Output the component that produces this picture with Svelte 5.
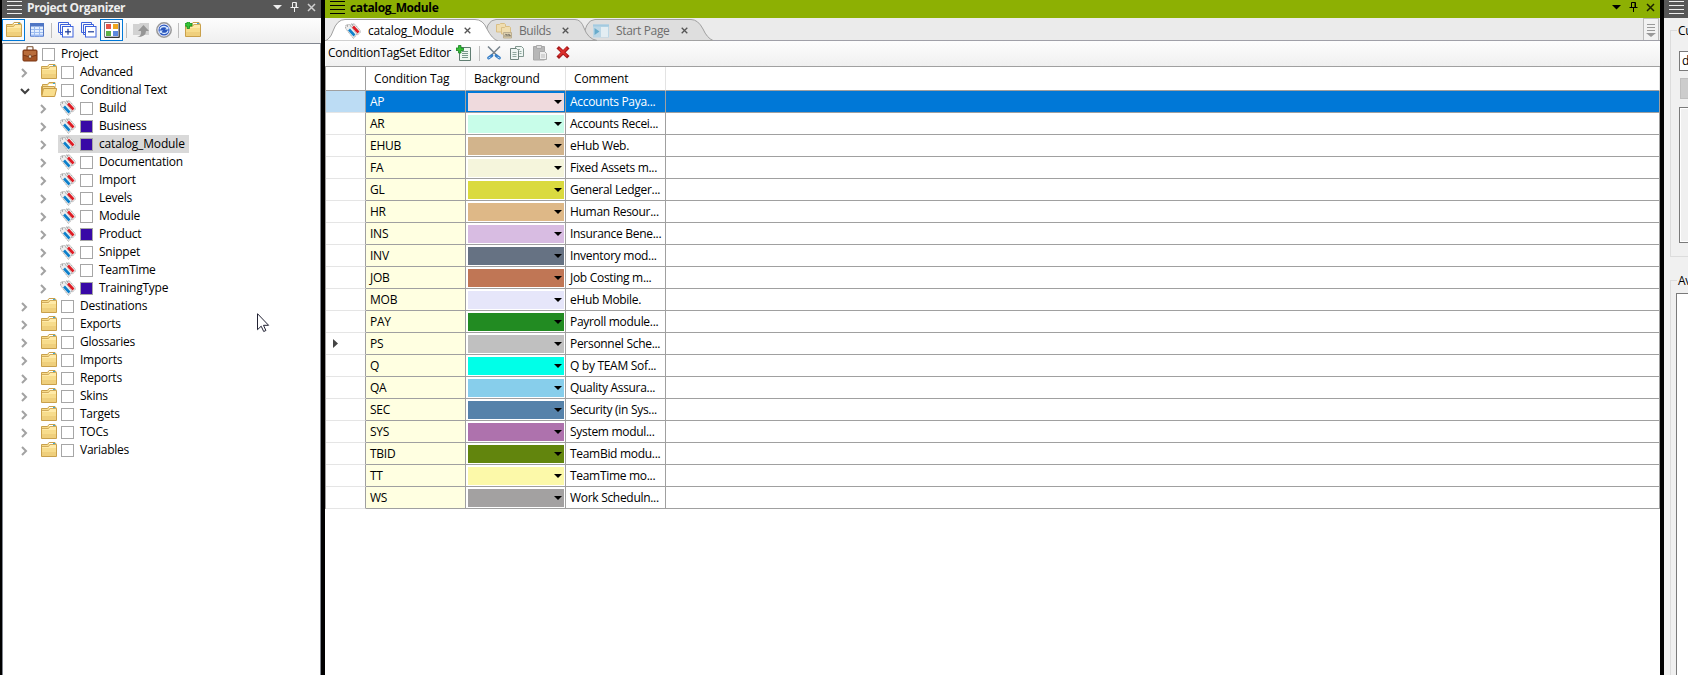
<script>
  const closed = ['Destinations', 'Exports', 'Glossaries', 'Imports', 'Reports', 'Skins', 'Targets', 'TOCs', 'Variables'];
  const tagSets = ['Build', 'Business', 'catalog_Module', 'Documentation', 'Import', 'Levels', 'Module', 'Product', 'Snippet', 'TeamTime', 'TrainingType'];
  const marked = ['Business', 'catalog_Module', 'Product', 'TrainingType'];
  const tree = [
    { label: 'Project', depth: 0, icon: 'case' },
    { label: 'Advanced', depth: 1, icon: 'folder' },
    { label: 'Conditional Text', depth: 1, icon: 'open' },
    ...tagSets.map((label) => ({ label, depth: 2, icon: 'tags', marked: marked.includes(label), selected: label === 'catalog_Module' })),
    ...closed.map((label) => ({ label, depth: 1, icon: 'folder' }))
  ];
  const rows = [
    ['AP', '#efdadd', 'Accounts Paya...'],
    ['AR', '#c8fde9', 'Accounts Recei...'],
    ['EHUB', '#d2b48c', 'eHub Web.'],
    ['FA', '#f5f5dc', 'Fixed Assets m...'],
    ['GL', '#dada3f', 'General Ledger...'],
    ['HR', '#deb887', 'Human Resour...'],
    ['INS', '#d8bce2', 'Insurance Bene...'],
    ['INV', '#667283', 'Inventory mod...'],
    ['JOB', '#c07655', 'Job Costing m...'],
    ['MOB', '#e6e6fa', 'eHub Mobile.'],
    ['PAY', '#228b22', 'Payroll module...'],
    ['PS', '#c0c0c0', 'Personnel Sche...'],
    ['Q', '#00ffe8', 'Q by TEAM Sof...'],
    ['QA', '#87ceeb', 'Quality Assura...'],
    ['SEC', '#5682aa', 'Security (in Sys...'],
    ['SYS', '#ae72ad', 'System modul...'],
    ['TBID', '#62850d', 'TeamBid modu...'],
    ['TT', '#fcf9a9', 'TeamTime mo...'],
    ['WS', '#a3a1a1', 'Work Scheduln...']
  ];
</script>

{#snippet icon(name)}
  <svg class="ic" width="16" height="16" viewBox="0 0 16 16">
    {#if name === 'folder' || name === 'add'}
      <path d="M.5 14.5v-12h6l1.5-2h6l1.5 2v12z" fill="#f7dc8c" stroke="#c9a04b" />
      <path d="M8 1.5h5.5" stroke="#fff" /><path d="M12 1.5h2" stroke="#3aa9d8" />
      <path d="M1 4.5h6.5l1.5-2h6V6H1z" fill="#ffeaa8" /><path d="M1 4.5h6.5l1.500-2h6" stroke="#d2ac5c" fill="none" />
      <path d="M1 10h14v4H1z" fill="#efcf7c" />
      {#if name === 'add'}<path d="M2 -1h2.500v2.500H7V4H4.500v2.500H2V4H-.5V1.500H2z" fill="#35c435" stroke="#168a22" stroke-width=".8" />{/if}
    {:else if name === 'open'}
      <path d="M1.500 13V2.500h5l1.500-2h6v12z" fill="#f5dc93" stroke="#c9a04b" />
      <path d="M8 2h6v3H3v-1h4z" fill="#fff" /><path d="M12 1.500h2" stroke="#3aa9d8" />
      <path d="M.5 13.500V4.500h13v2" fill="none" stroke="#c9a04b" />
      <path d="M2.500 6.500h13.200l-2 8H.7z" fill="#f9de8d" stroke="#c89b45" />
    {:else if name === 'case'}
      <path d="M5 5V2q0-1.500 1.500-1.500h3Q11 .5 11 2v3" fill="none" stroke="#97755c" stroke-width="1.500" />
      <rect x="1" y="4" width="14" height="11" rx="1" fill="#a45425" stroke="#7b3512" />
      <path d="M2 5h12v4l-6 2-6-2z" fill="#b96d3b" /><path d="M1 9l7 2 7-2" stroke="#7c3917" fill="none" />
      <rect x="6.500" y="9" width="3" height="3" rx="1" fill="#e8d2b8" stroke="#5c2a10" stroke-width=".6" />
    {:else if name === 'tags'}
      <path d="M5 3l1-2h3.500l6.500 7.500-3.500 3.500L5 5z" fill="#eee" stroke="#aaa" stroke-width="1" stroke-dasharray="1.500 .6" />
      <path d="M.500 5L1 2l3.500-.5 7.500 9.500-3.500 4.500L1 6z" fill="#eee" stroke="#aaa" stroke-width="1" stroke-dasharray="1.500 .6" />
      <path d="M8 3.500l5.500 6" stroke="#df1c24" stroke-width="2.600" /><path d="M4 6.500l5.500 6" stroke="#0d80cb" stroke-width="2.600" />
      <path d="M2 3h1M7 2h1" stroke="#777" />
    {:else if name === 'table'}
      <rect x="1.500" y="1.500" width="13" height="13" rx=".5" fill="#e3efff" stroke="#5578c4" /><path d="M1 1h14v3.500H1z" fill="#4f76c4" />
      <path d="M2 7.500h12M2 10.500h12M5.500 4.500v10M10.500 4.500v10" stroke="#9cbcf0" /><path d="M2 12.500h12v2H2z" fill="#9dbbf3" />
    {:else if name === 'expand' || name === 'collapse'}
      <path d="M4 10.500H.5v-10h10V3M6 12.500H2.500v-10h10V5" fill="none" stroke="#3c62dc" />
      <rect x="4.500" y="4.500" width="10.500" height="10.500" fill="#fff" stroke="#3c62dc" />
      <path d="M7 9.800h6" stroke="#173796" stroke-width="1.200" />{#if name === 'expand'}<path d="M10 6.800v6" stroke="#173796" stroke-width="1.200" />{/if}
    {:else if name === 'colors'}
      <rect x=".5" y=".5" width="14.500" height="14.500" fill="#fff" stroke="#778" /><path d="M15.300 1v14.500H1" stroke="#333" fill="none" />
      <path d="M2 2h5v5H2z" fill="#e65348" /><path d="M9 2h5v5H9z" fill="#f1a51c" /><path d="M2 9h5v5H2z" fill="#5fb24a" /><path d="M9 9h5v5H9z" fill="#5c88dd" />
    {:else if name === 'up'}
      <path d="M0 2h6l1-1h9v12H0z" fill="#d2d2d2" /><path d="M4 15q5-1 4-6H5l5.500-6L16 9h-3q0 6-9 6z" fill="#969696" />
    {:else if name === 'sync'}
      <circle cx="8" cy="8" r="7.200" fill="#eef" stroke="#999" stroke-width="1.500" /><circle cx="8" cy="8" r="5.500" fill="#2855bd" />
      <path d="M4 7.500q.5-3 4-3 2 0 3 1.500M12 8.500q-.5 3-4 3-2 0-3-1.500" stroke="#d8eaff" fill="none" stroke-width="1.300" /><path d="M12.500 4v3.500H9zM3.500 12V8.500H7z" fill="#d8eaff" />
    {:else if name === 'newdoc'}
      <path d="M3.500 2.500h11v13h-11z" fill="#f0f7f1" stroke="#607d72" /><path d="M6 6.500h6M6 8.500h6M6 10.500h6M6 12.500h6" stroke="#78978a" />
      <path d="M2.500 .5H5V3h2.500v2.500H5V8H2.500V5.500H0V3h2.500z" fill="#35bd35" stroke="#168022" stroke-width=".8" />
    {:else if name === 'cut'}
      <path d="M2 1.500l9 9M14 1.500l-9 9" stroke="#76828c" stroke-width="1.500" /><path d="M2.500 13l3.500-2.500M13.500 13L10 10.500" stroke="#357dc6" stroke-width="2.800" stroke-linecap="round" /><path d="M2.500 13l2-1M13.500 13l-2-1" stroke="#b5d8fa" />
    {:else if name === 'copy'}
      <path d="M6.500 1.500h6l2 2v8h-8z" fill="#eff6f3" stroke="#81978f" /><path d="M1.500 3.500h6l2 2v9h-8z" fill="#eff6f3" stroke="#70857e" />
      <path d="M3.500 7.500h4M3.500 9.500h4M3.500 11.500h4M8 4.500h3M10.500 6.500h2M10.500 8.500h2" stroke="#91a89f" />
    {:else if name === 'paste'}
      <path d="M1.500 1.500h11V15h-11z" fill="#b7b7b7" stroke="#a8a8a8" /><path d="M4.500 .5h5v3h-5z" fill="#ddd" stroke="#aaa" /><path d="M7.500 6.500h5l2 2v6h-7z" fill="#eee" stroke="#aaa" /><path d="M9 10h4M9 12h4" stroke="#bbb" />
    {:else if name === 'delete'}
      <path d="M4 3.500l8 7.500M12 3.500L4 11.500" stroke="#a7191b" stroke-width="3.600" stroke-linecap="square" /><path d="M4 3.500l8 7.500M12 3L4 11" stroke="#dc2f2b" stroke-width="1.800" />
    {:else if name === 'builds'}
      <path d="M.5 9V1.500h3l1-1h4l1 1V9z" fill="#efddb0" stroke="#d9be85" /><path d="M5.500 11V4.500h3l1-1h4l1 1V11z" fill="#efddb0" stroke="#d9be85" />
      <path d="M7.500 15V9.500h8V15z" fill="#ddcfae" stroke="#bcae90" /><path d="M8 13h7M9 11l2 1.500L13 11l2 2" stroke="#96907f" />
    {:else if name === 'start'}
      <path d="M0 1.500h16v13H0z" fill="#bcd7e6" /><path d="M0 1.500h16v2H0z" fill="#a3cae0" /><path d="M8 4h7v10H8z" fill="#e3edf2" /><path d="M1.500 5l5 3.500-5 3.500z" fill="#68abcb" />
    {/if}
  </svg>
{/snippet}

{#snippet lines()}
  <svg class="grip" width="15" height="18"><path d="M0 1.500h15M0 5.500h15M0 9.500h15M0 13.500h15" stroke="currentColor" /></svg>
{/snippet}

{#snippet controls()}
  <svg class="controls" width="45" height="18">
    <path d="M0 5h9L4.500 9.500z" fill="currentColor" />
    <path d="M19.500 7.500v-5h4v5M23 3v4M17.500 7.500h8M21.500 8v4" fill="none" stroke="currentColor" />
    <path d="M35 4l7 7M42 4l-7 7" stroke="currentColor" stroke-width="1.500" opacity=".8" />
  </svg>
{/snippet}

{#snippet close()}
  <svg class="close" width="7" height="7"><path d="M.7.700l5.600 5.600M6.300.700L.7 6.300" stroke="#555" stroke-width="1.300" /></svg>
{/snippet}

<div class="app">
  <aside class="organizer">
    <header class="title dark">{@render lines()}<b>Project Organizer</b>{@render controls()}</header>
    <div class="tools">
      <span class="tool on">{@render icon('folder')}</span>
      <span class="tool">{@render icon('table')}</span>
      <i class="sep"></i>
      <span class="tool">{@render icon('expand')}</span>
      <span class="tool">{@render icon('collapse')}</span>
      <span class="tool on">{@render icon('colors')}</span>
      <i class="sep"></i>
      <span class="tool">{@render icon('up')}</span>
      <span class="tool">{@render icon('sync')}</span>
      <i class="sep"></i>
      <span class="tool">{@render icon('add')}</span>
    </div>
    <div class="tree">
      {#each tree as node}
        <div class="node d{node.depth}">
          <span class="arrow">
            {#if node.icon === 'open'}
              <svg width="10" height="7"><path d="M1 1l4 4 4-4" fill="none" stroke="#404040" stroke-width="2" /></svg>
            {:else if node.depth}
              <svg width="10" height="10"><path d="M2 1l4 4-4 4" fill="none" stroke="#a2a2a2" stroke-width="2" /></svg>
            {/if}
          </span>
          <span class="item" class:selected={node.selected}>
            {@render icon(node.icon)}<i class="box" class:marked={node.marked}></i><span>{node.label}</span>
          </span>
        </div>
      {/each}
    </div>
    <svg class="cursor" width="13" height="20" viewBox="0 0 13 20"><path d="M.5.700v16l3.700-3.500 2.500 5.300 2.200-1-2.400-5.200h5.100z" fill="#fff" stroke="#223" /></svg>
  </aside>

  <main class="editor">
    <header class="title green">{@render lines()}<b>catalog_Module</b>{@render controls()}</header>
    <div class="tabs">
      <svg class="shapes" width="1335" height="23">
        <path d="M0 22.500H1335" stroke="#a0a0a8" />
        <path d="M254 23C258 20 259 14 262 7Q265 1.500 270 1.500H366Q373 1.500 378 11Q382 20 388 22.500z" fill="#dedede" stroke="#a0a0a0" />
        <path d="M158 23C160 18 161 12 163 7Q166 1.500 171 1.500H250Q256 1.500 259 10Q263 21 272 22.500z" fill="#dedede" stroke="#a0a0a0" />
        <path d="M-1 23Q5 22 8 13Q12 1.500 20 1.500H150Q158 1.500 162 11Q167 21 173 23z" fill="#fff" stroke="#a0a0a0" />
      </svg>
      <div class="tab one">{@render icon('tags')}<span>catalog_Module</span>{@render close()}</div>
      <div class="tab two">{@render icon('builds')}<span>Builds</span>{@render close()}</div>
      <div class="tab three">{@render icon('start')}<span>Start Page</span>{@render close()}</div>
      <div class="more"><svg width="10" height="14"><path d="M1 1.500h8M1 4.500h8M1 7.500h8" stroke="#999" /><path d="M0 10h10l-5 4z" fill="#999" /></svg></div>
    </div>
    <div class="editbar">
      <span class="name">ConditionTagSet Editor</span>
      {@render icon('newdoc')}<i class="sep"></i>{@render icon('cut')}{@render icon('copy')}{@render icon('paste')}{@render icon('delete')}
    </div>
    <div class="grid">
      <div class="row head"><span class="mark"></span><span>Condition Tag</span><span>Background</span><span>Comment</span><span></span></div>
      {#each rows as [tag, color, comment], i}
        <div class="row" class:active={i === 0}>
          <span class="mark">{#if tag === 'PS'}<svg width="5" height="9"><path d="M0 0l5 4.500L0 9z" fill="#444" /></svg>{/if}</span>
          <span class="tag">{tag}</span>
          <span class="bg"><i style="background: {color}"><svg width="8" height="4"><path d="M0 0h8L4 4z" fill="#000" /></svg></i></span>
          <span class="comment">{comment}</span>
          <span></span>
        </div>
      {/each}
    </div>
  </main>

  <aside class="side">
    <header class="title dark">{@render lines()}</header>
    <section class="group first">
      <span class="legend">Cu</span>
      <div class="input">d</div>
      <div class="button"></div>
      <div class="list"></div>
    </section>
    <section class="group second">
      <span class="legend">Av</span>
      <div class="list tall"></div>
    </section>
  </aside>
</div>

<style>
  :global(body) { margin: 0; overflow: hidden; }
  * { box-sizing: border-box; }
  svg { display: block; flex: none; }
  .app { position: relative; display: flex; gap: 4px; width: 1688px; height: 675px; padding-left: 2px; overflow: hidden; background: #000; color: #000; font: 12px/18px "Open Sans", "Noto Sans", sans-serif; letter-spacing: -.25px; white-space: nowrap; }
  .organizer { display: flex; flex-direction: column; width: 319px; flex: none; }
  .title { display: flex; align-items: flex-start; height: 18px; flex: none; padding-left: 5px; line-height: 16px; }
  .title b { margin-left: 5px; font-weight: 700; letter-spacing: -.38px; }
  .dark { background: #575757; color: #eee; }
  .green { background: #8db003; }
  .controls { margin-left: auto; margin-right: 3px; }
  .tools { display: flex; align-items: center; height: 25px; flex: none; padding-bottom: 1px; background: linear-gradient(#fdfdfd, #efefef); }
  .tool { display: flex; align-items: center; justify-content: center; width: 23px; height: 22px; }
  .on { border: 1px solid #0078d7; background: #f8fbff; }
  .sep { width: 1px; height: 15px; margin: 0 2px 0 3px; background: #bdbdbd; }
  .tree { flex: 1; border: 1px solid #828790; border-bottom: 0; background: #fff; padding-top: 1px; }
  .node { display: flex; align-items: center; height: 18px; }
  .arrow { display: flex; width: 10px; height: 10px; align-items: center; margin-right: 9px; padding-top: 2px; flex: none; }
  .item { display: flex; align-items: center; height: 18px; padding: 0 5px 0 2px; }
  .item > span { margin-left: 6px; }
  .d0 .arrow { visibility: hidden; margin-left: 8px; margin-right: -1px; }
  .d1 .arrow { margin-left: 17px; }
  .d2 .arrow { margin-left: 36px; }
  .box { width: 13px; height: 13px; margin-left: 4px; border: 1px solid #a6a6a6; background: #fff; }
  .marked { background: #3809a6; }
  .selected { padding-right: 4px; background: #d9d9d9; letter-spacing: -.15px; }
  .cursor { position: absolute; left: 257px; top: 313px; }
  .editor { display: flex; flex-direction: column; width: 1335px; flex: none; background: #fff; }
  .tabs { position: relative; display: flex; height: 23px; flex: none; background: #ebebeb; }
  .shapes { position: absolute; inset: 0; }
  .tab { position: relative; display: flex; align-items: center; height: 23px; padding-top: 2px; }
  .tab span { margin-left: 7px; }
  .close { margin-left: auto; }
  .one { width: 126px; margin-left: 20px; letter-spacing: -.15px; }
  .two { width: 73px; margin-left: 25px; color: #6d6d6d; letter-spacing: -.4px; }
  .three { width: 95px; margin-left: 24px; color: #6d6d6d; letter-spacing: -.35px; }
  .more { position: relative; display: flex; justify-content: center; width: 16px; height: 22px; margin-left: auto; margin-right: 1px; padding-top: 4px; border: 1px solid #bbb; border-bottom: 0; background: #f2f2f2; }
  .editbar { display: flex; align-items: center; height: 25px; flex: none; padding: 0 0 1px 3px; background: linear-gradient(#fdfdfd, #f0f0f0); }
  .name { width: 128px; }
  .editbar .sep { margin: 0 6px 0 7px; }
  .editbar .sep ~ :global(.ic) { margin-right: 7px; }
  .grid { border-left: 1px solid #a0a0a0; border-top: 1px solid #a0a0a0; }
  .row { display: grid; grid-template-columns: 40px 100px 100px 100px 1fr; height: 22px; line-height: 22px; }
  .row > span { border-right: 1px solid #a0a0a0; border-bottom: 1px solid #a0a0a0; overflow: hidden; }
  .row > .mark { display: flex; align-items: center; padding-left: 7px; border-bottom-color: #e5e5e5; }
  .head { height: 24px; line-height: 24px; letter-spacing: -.15px; }
  .head > span { padding-left: 8px; border-right-color: #e3e3e3; }
  .head > .mark { border-color: #a0a0a0; }
  .tag { padding-left: 4px; background: #ffffe1; }
  .comment { padding-left: 4px; letter-spacing: -.3px; }
  .bg { padding: 2px 1px 0 2px; }
  .bg i { display: flex; align-items: center; justify-content: flex-end; height: 18px; padding-right: 2px; }
  .active > span { background: #0078d7; color: #fff; }
  .active > .mark { background: #bcdcf4; }
  .side { flex: 1; min-width: 0; background: #f0f0f0; overflow: hidden; }
  .group { width: 100px; margin-left: 6px; border: 1px solid #dcdcdc; }
  .first { height: 227px; margin-top: 12px; }
  .second { height: 500px; margin-top: 23px; }
  .legend { display: block; width: max-content; height: 18px; margin: -9px 0 0 6px; padding: 0 1px; background: #f0f0f0; }
  .input { height: 20px; margin: 11px 0 0 8px; padding-left: 2px; border: 1px solid #7a7a7a; background: #fff; }
  .button { height: 21px; margin: 7px 0 0 9px; border: 1px solid #bfbfbf; background: #ccc; }
  .list { height: 136px; margin: 8px 0 0 8px; border: 1px solid #7a7a7a; box-shadow: inset 0 0 0 1px #fff; background: #f0f0f0; }
  .tall { height: 480px; margin: 3px 0 0 5px; background: #fff; }
</style>
